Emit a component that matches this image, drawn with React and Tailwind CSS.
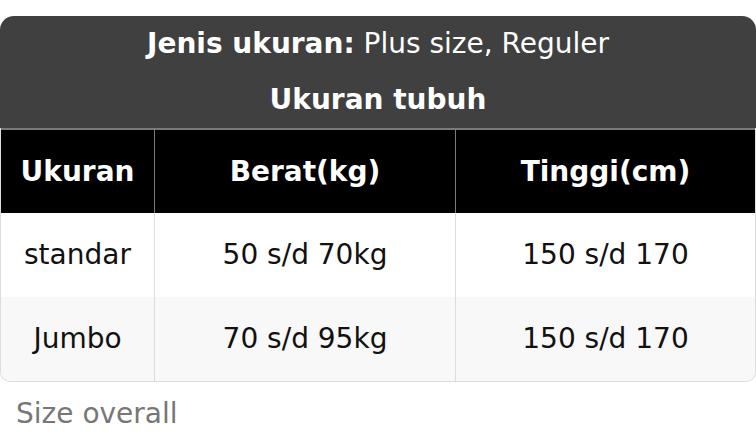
const ROWS = [
  { ukuran: 'standar', berat: '50 s/d 70kg', tinggi: '150 s/d 170' },
  { ukuran: 'Jumbo', berat: '70 s/d 95kg', tinggi: '150 s/d 170' },
];

export default function App() {
  return (
    <div className="w-[756px] h-[448px] bg-white pt-4 font-['DejaVu_Sans',sans-serif] text-[28px]">
      {/* caption */}
      <div className="rounded-t-[14px] bg-[#404040] text-white text-center leading-[56px]">
        <div><span className="font-bold">Jenis ukuran:</span> Plus size, Reguler</div>
        <div className="font-bold">Ukuran tubuh</div>
      </div>

      <div className="border-x border-b border-[#dcdcdc] rounded-b-[10px] overflow-hidden">
        <div className="-mx-px flex h-[85px] bg-black text-white font-bold border-x border-t-2 border-[#7a7a7a]">
          <div className="w-[154px] flex items-center justify-center border-r border-[#7a7a7a]">Ukuran</div>
          <div className="w-[301px] flex items-center justify-center border-r border-[#7a7a7a]">Berat(kg)</div>
          <div className="flex-1 flex items-center justify-center">Tinggi(cm)</div>
        </div>
        {ROWS.map((r, i) => (
          <div key={r.ukuran} className={`flex h-[84px] text-[#111] ${i % 2 ? 'bg-[#f8f8f8]' : 'bg-white'}`}>
            <div className="w-[154px] flex items-center justify-center border-r border-[#dcdcdc]">{r.ukuran}</div>
            <div className="w-[301px] flex items-center justify-center border-r border-[#dcdcdc]">{r.berat}</div>
            <div className="flex-1 flex items-center justify-center">{r.tinggi}</div>
          </div>
        ))}
      </div>

      <p className="mt-[11px] pl-4 leading-[42px] text-[#777]">Size overall</p>
    </div>
  );
}
